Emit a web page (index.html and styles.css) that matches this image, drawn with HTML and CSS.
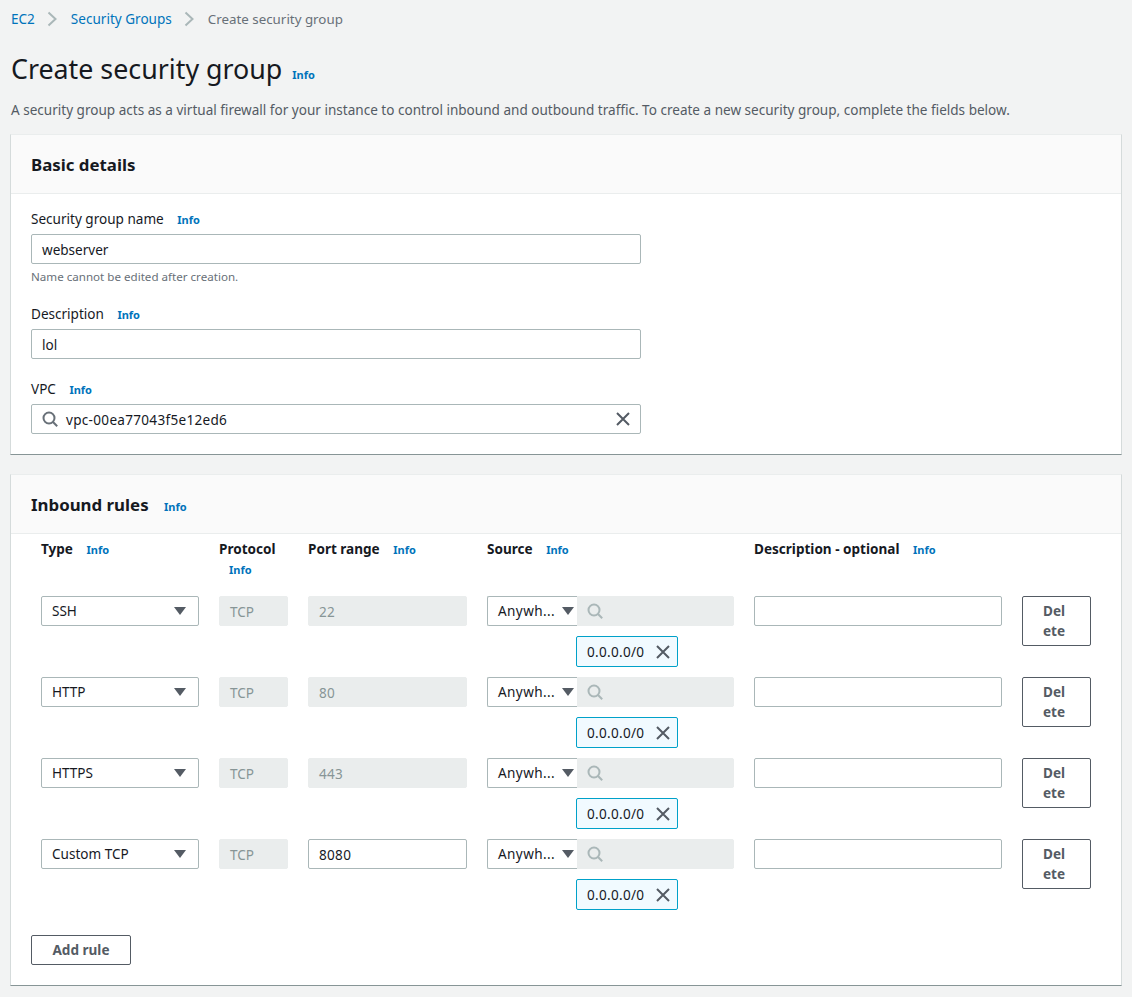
FILE: index.html
```html
<!DOCTYPE html>
<html>
<head>
<meta charset="utf-8">
<title>Create security group</title>
<link rel="stylesheet" href="styles.css">
</head>
<body>
<svg class="icon-defs" width="0" height="0">
  <symbol id="i-search" viewBox="0 0 16 16"><circle cx="7" cy="7" r="5.5" fill="none" stroke="currentColor" stroke-width="2"/><path d="M11 11l4.2 4.2" fill="none" stroke="currentColor" stroke-width="2"/></symbol>
  <symbol id="i-close" viewBox="0 0 16 16"><path d="M2 2l12 12M14 2L2 14" fill="none" stroke="currentColor" stroke-width="2"/></symbol>
</svg>

<nav class="breadcrumb">
  <a href="#">EC2</a>
  <svg class="crumb-sep" viewBox="0 0 10 16"><path d="M1.5 1.5L8.5 8l-7 6.5" fill="none" stroke="currentColor" stroke-width="2"/></svg>
  <a href="#">Security Groups</a>
  <svg class="crumb-sep" viewBox="0 0 10 16"><path d="M1.5 1.5L8.5 8l-7 6.5" fill="none" stroke="currentColor" stroke-width="2"/></svg>
  <span class="crumb-current">Create security group</span>
</nav>

<div class="page-title">
  <h1>Create security group</h1>
  <a class="info" href="#">Info</a>
</div>
<p class="page-desc">A security group acts as a virtual firewall for your instance to control inbound and outbound traffic. To create a new security group, complete the fields below.</p>

<section class="panel">
  <header class="panel-head"><h2>Basic details</h2></header>
  <div class="panel-body details">
    <div class="field field-name">
      <label>Security group name <a class="info" href="#">Info</a></label>
      <div class="input">webserver</div>
      <p class="hint">Name cannot be edited after creation.</p>
    </div>
    <div class="field field-desc">
      <label>Description <a class="info" href="#">Info</a></label>
      <div class="input">lol</div>
    </div>
    <div class="field">
      <label>VPC <a class="info" href="#">Info</a></label>
      <div class="input search-input">
        <svg class="ic-search"><use href="#i-search"/></svg>
        <span class="grow num">vpc-00ea77043f5e12ed6</span>
        <svg class="ic-clear"><use href="#i-close"/></svg>
      </div>
    </div>
  </div>
</section>

<section class="panel panel-rules">
  <header class="panel-head"><h2>Inbound rules <a class="info" href="#">Info</a></h2></header>
  <div class="panel-body rules">
    <div class="rule-grid rule-labels">
      <div>Type <a class="info" href="#">Info</a></div>
      <div>Protocol <a class="info" href="#">Info</a></div>
      <div>Port range <a class="info" href="#">Info</a></div>
      <div>Source <a class="info" href="#">Info</a></div>
      <div>Description - optional <a class="info" href="#">Info</a></div>
    </div>

    <div class="rule-grid rule-row">
      <div class="select">SSH<i class="caret"></i></div>
      <div class="input disabled">TCP</div>
      <div class="input disabled num">22</div>
      <div class="source">
        <div class="select select-source"><span>Anywh...</span><i class="caret"></i></div>
        <div class="input disabled source-search"><svg class="ic-search"><use href="#i-search"/></svg></div>
        <div class="tag num">0.0.0.0/0<svg class="ic-tag"><use href="#i-close"/></svg></div>
      </div>
      <div class="input"></div>
      <button class="btn btn-delete">Del<br>ete</button>
    </div>

    <div class="rule-grid rule-row">
      <div class="select">HTTP<i class="caret"></i></div>
      <div class="input disabled">TCP</div>
      <div class="input disabled num">80</div>
      <div class="source">
        <div class="select select-source"><span>Anywh...</span><i class="caret"></i></div>
        <div class="input disabled source-search"><svg class="ic-search"><use href="#i-search"/></svg></div>
        <div class="tag num">0.0.0.0/0<svg class="ic-tag"><use href="#i-close"/></svg></div>
      </div>
      <div class="input"></div>
      <button class="btn btn-delete">Del<br>ete</button>
    </div>

    <div class="rule-grid rule-row">
      <div class="select">HTTPS<i class="caret"></i></div>
      <div class="input disabled">TCP</div>
      <div class="input disabled num">443</div>
      <div class="source">
        <div class="select select-source"><span>Anywh...</span><i class="caret"></i></div>
        <div class="input disabled source-search"><svg class="ic-search"><use href="#i-search"/></svg></div>
        <div class="tag num">0.0.0.0/0<svg class="ic-tag"><use href="#i-close"/></svg></div>
      </div>
      <div class="input"></div>
      <button class="btn btn-delete">Del<br>ete</button>
    </div>

    <div class="rule-grid rule-row">
      <div class="select">Custom TCP<i class="caret"></i></div>
      <div class="input disabled">TCP</div>
      <div class="input num">8080</div>
      <div class="source">
        <div class="select select-source"><span>Anywh...</span><i class="caret"></i></div>
        <div class="input disabled source-search"><svg class="ic-search"><use href="#i-search"/></svg></div>
        <div class="tag num">0.0.0.0/0<svg class="ic-tag"><use href="#i-close"/></svg></div>
      </div>
      <div class="input"></div>
      <button class="btn btn-delete">Del<br>ete</button>
    </div>

    <button class="btn btn-add">Add rule</button>
  </div>
</section>
</body>
</html>
```

FILE: styles.css
```css
html, body {
  margin: 0;
  padding: 0;
}
body {
  width: 1132px;
  height: 997px;
  overflow: hidden;
  box-sizing: border-box;
  padding: 0 11px;
  background-color: #f2f3f3;
  color: #16191f;
  font-family: "Noto Sans", "Open Sans", sans-serif;
  font-size: 13.55px;
  line-height: 20px;
}
.icon-defs {
  position: absolute;
}
a {
  color: #0073bb;
  text-decoration: none;
}
h1, h2, p {
  margin: 0;
}
.num {
  letter-spacing: 0.3px;
}

.breadcrumb {
  display: flex;
  align-items: center;
  height: 20px;
  padding-top: 9px;
  color: #687078;
}
.crumb-sep {
  width: 10px;
  height: 16px;
  margin: 0 14px 0 12px;
  color: #aab7b8;
}
.crumb-current {
  font-size: 13.35px;
}

.page-title {
  display: flex;
  align-items: baseline;
  margin-top: 20px;
  height: 40px;
}
.page-title h1 {
  font-size: 26.8px;
  line-height: 40px;
  font-weight: 400;
  margin-right: 10px;
}
.info {
  font-size: 11px;
  font-weight: 700;
}
.page-desc {
  margin-top: 11px;
  color: #545b64;
}

.panel {
  background: #fff;
  margin: 14px -1px 0;
  height: 321px;
  box-sizing: border-box;
  border-top: 1px solid #eaeded;
  border-left: 1px solid #d5dbdb;
  border-right: 1px solid #d5dbdb;
  border-bottom: 1px solid #879596;
}
.panel-rules {
  margin-top: 19px;
  height: 512px;
}
.panel-head {
  height: 59px;
  box-sizing: border-box;
  padding: 20px 20px 0;
  background: #fafafa;
  border-bottom: 1px solid #eaeded;
}
.panel-head h2 {
  font-size: 16.85px;
  line-height: 20px;
  font-weight: 700;
}
.panel-head .info {
  margin-left: 11px;
}
.panel-body {
  padding: 15px 20px 0;
}

.field {
  width: 610px;
}
.field label {
  display: block;
  height: 20px;
}
.field label .info {
  margin-left: 10px;
}
.field .input {
  margin-top: 5px;
}
.hint {
  margin-top: 3px;
  font-size: 11.6px;
  line-height: 20px;
  color: #687078;
}
.field-name {
  height: 95px;
}
.field-desc {
  height: 75px;
}

.input, .select {
  height: 30px;
  box-sizing: border-box;
  border: 1px solid #aab7b8;
  border-radius: 2px;
  background: #fff;
  padding: 2px 10px 0;
  display: flex;
  align-items: center;
}
.select {
  padding-top: 0;
}
.input.disabled {
  background: #eaeded;
  border-color: #eaeded;
  color: #879596;
}
.search-input .grow {
  flex: 1;
  margin-left: 8px;
}
.ic-search {
  width: 16px;
  height: 16px;
  margin-top: -2px;
  color: #687078;
  flex: none;
}
.disabled .ic-search {
  color: #aab7b8;
}
.ic-clear {
  width: 16px;
  height: 16px;
  margin: -2px -1px 0 0;
  color: #545b64;
}

.rules {
  padding: 5px 0 0 30px;
}
.rule-grid {
  display: grid;
  grid-template-columns: 158px 69px 159px 247px 248px 69px;
  column-gap: 20px;
}
.rule-labels {
  height: 40px;
  margin-bottom: 17px;
  font-weight: 700;
}
.rule-labels .info {
  margin-left: 10px;
}
.rule-row {
  height: 71px;
  margin-bottom: 10px;
  align-items: start;
}
.select {
  position: relative;
  padding-right: 24px;
}
.caret {
  position: absolute;
  right: 12px;
  top: 10px;
  width: 0;
  height: 0;
  border-left: 6px solid transparent;
  border-right: 6px solid transparent;
  border-top: 8px solid #545b64;
}
.source {
  display: grid;
  grid-template-columns: 90px 158px;
  row-gap: 10px;
}
.select-source {
  white-space: nowrap;
  border-right: 0;
  border-radius: 2px 0 0 2px;
}
.select-source span {
  letter-spacing: 0.4px;
}
.select-source .caret {
  right: 3px;
}
.source-search {
  margin-left: -1px;
  width: 158px;
}
.tag {
  grid-column: 2;
  margin-left: -1px;
  width: 102px;
  height: 31px;
  box-sizing: border-box;
  border: 1px solid #00a1c9;
  border-radius: 2px;
  background: #f1faff;
  padding: 1px 6px 0 10px;
  display: flex;
  align-items: center;
  justify-content: space-between;
}
.ic-tag {
  width: 16px;
  height: 16px;
  margin-top: -1px;
  color: #545b64;
}
.btn {
  display: block;
  box-sizing: border-box;
  background: #fff;
  border: 1px solid #545b64;
  border-radius: 2px;
  color: #545b64;
  font: inherit;
  font-weight: 700;
}
.btn-delete {
  width: 69px;
  height: 50px;
  padding: 4px 20px;
  text-align: left;
}
.btn-add {
  width: 100px;
  height: 30px;
  margin: 25px 0 0 -10px;
  padding: 0;
}
```
